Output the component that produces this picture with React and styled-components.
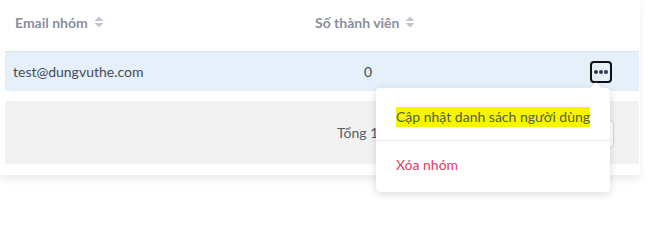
import React from "react"
import styled, { createGlobalStyle } from "styled-components"

const GlobalStyle = createGlobalStyle`
  body {
    margin: 0;
    min-height: 203px;
    background: #fff;
    font-family: Lato, "Noto Sans", sans-serif;
  }
`

const Page = styled.div`
  min-height: 203px;
`

const Card = styled.div`
  position: relative;
  width: 634px;
  padding: 0 1px 11px 5px;
  background: #fff;
  box-shadow: 0 5px 8px rgba(0, 0, 0, 0.07);
`

const Row = styled.div`
  display: grid;
  grid-template-columns: 300px 110px 1fr;
  align-items: center;
  height: ${p => (p.head ? "52px" : "39px")};
  background: ${p => (p.head ? "#fff" : "#e6f0fb")};
  border-bottom: ${p => (p.head ? "1px solid #dfe6f0" : "none")};
  box-sizing: border-box;
`

const HeadCell = styled.div`
  display: flex;
  align-items: center;
  gap: 6px;
  padding-left: 10px;
  padding-bottom: 7px;
  font-size: 14px;
  font-weight: 700;
  color: #8a8f9d;
  white-space: nowrap;

  svg {
    flex-shrink: 0;
  }
`

const Cell = styled.div`
  font-size: 14px;
  color: #454b55;
  text-align: ${p => p.align || "left"};
  padding: ${p => p.pad || "0 0 0 8px"};
  display: ${p => (p.actions ? "flex" : "block")};
  justify-content: flex-end;
`

const SortIcon = () => (
  <svg width="10" height="12" viewBox="0 0 10 12">
    <path d="M5 0.5 L9.5 5 H0.5 Z" fill="#c2c6cf" />
    <path d="M5 11.5 L9.5 7 H0.5 Z" fill="#c2c6cf" />
  </svg>
)

const DotsButton = styled.button`
  width: 22px;
  height: 22px;
  padding: 0;
  border: 2px solid #111;
  border-radius: 4px;
  background: transparent;
  display: flex;
  align-items: center;
  justify-content: center;
  gap: 1px;
  margin-right: 27px;
  span {
    width: 4px;
    height: 4px;
    border-radius: 50%;
    background: #2b3a4a;
  }
`

const Footer = styled.div`
  margin-top: 10px;
  height: 63px;
  background: #f2f2f2;
  display: flex;
  align-items: center;
  justify-content: flex-end;
  padding-right: 25px;
  gap: 12px;
`

const Total = styled.span`
  font-size: 14px;
  color: #555b66;
`

const Pager = styled.div`
  width: 185px;
  height: 28px;
  box-sizing: border-box;
  border: 1px solid #d9d9d9;
  border-radius: 4px;
  background: #fff;
  margin-top: 2px;
`

const Menu = styled.div`
  position: absolute;
  top: 88px;
  left: 376px;
  width: 234px;
  background: #fff;
  border-radius: 4px;
  box-shadow: 0 2px 8px rgba(0, 0, 0, 0.15);
  z-index: 2;

  &::before {
    content: "";
    position: absolute;
    top: -4px;
    left: 216px;
    width: 8px;
    height: 8px;
    background: #fff;
    transform: rotate(45deg);
    box-shadow: -1px -1px 2px rgba(0, 0, 0, 0.06);
  }
`

const MenuItem = styled.div`
  position: relative;
  height: 52px;
  box-sizing: border-box;
  display: flex;
  align-items: center;
  padding: ${p => (p.danger ? "0 0 4px 20px" : "6px 0 0 20px")};
  font-size: 14px;
  color: ${p => (p.danger ? "#e2405f" : "#54613f")};
  border-top: ${p => (p.divided ? "1px solid #e3e8f0" : "none")};
  mark {
    background: #f7f500;
    color: inherit;
    padding: 1px 0 2px;
  }
`

export default function App() {
  return (
    <Page>
      <GlobalStyle />
      <Card>
        <Row head>
          <HeadCell>Email nhóm <SortIcon /></HeadCell>
          <HeadCell>Số thành viên <SortIcon /></HeadCell>
          <div />
        </Row>
        <Row>
          <Cell>test@dungvuthe.com</Cell>
          <Cell align="right" pad="0 43px 0 0">0</Cell>
          <Cell actions pad="0">
            <DotsButton>
              <span />
              <span />
              <span />
            </DotsButton>
          </Cell>
        </Row>
        <Footer>
          <Total>Tổng 1 nhóm</Total>
          <Pager />
        </Footer>
        <Menu>
          <MenuItem>
            <mark>Cập nhật danh sách người dùng</mark>
          </MenuItem>
          <MenuItem danger divided>Xóa nhóm</MenuItem>
        </Menu>
      </Card>
    </Page>
  )
}
